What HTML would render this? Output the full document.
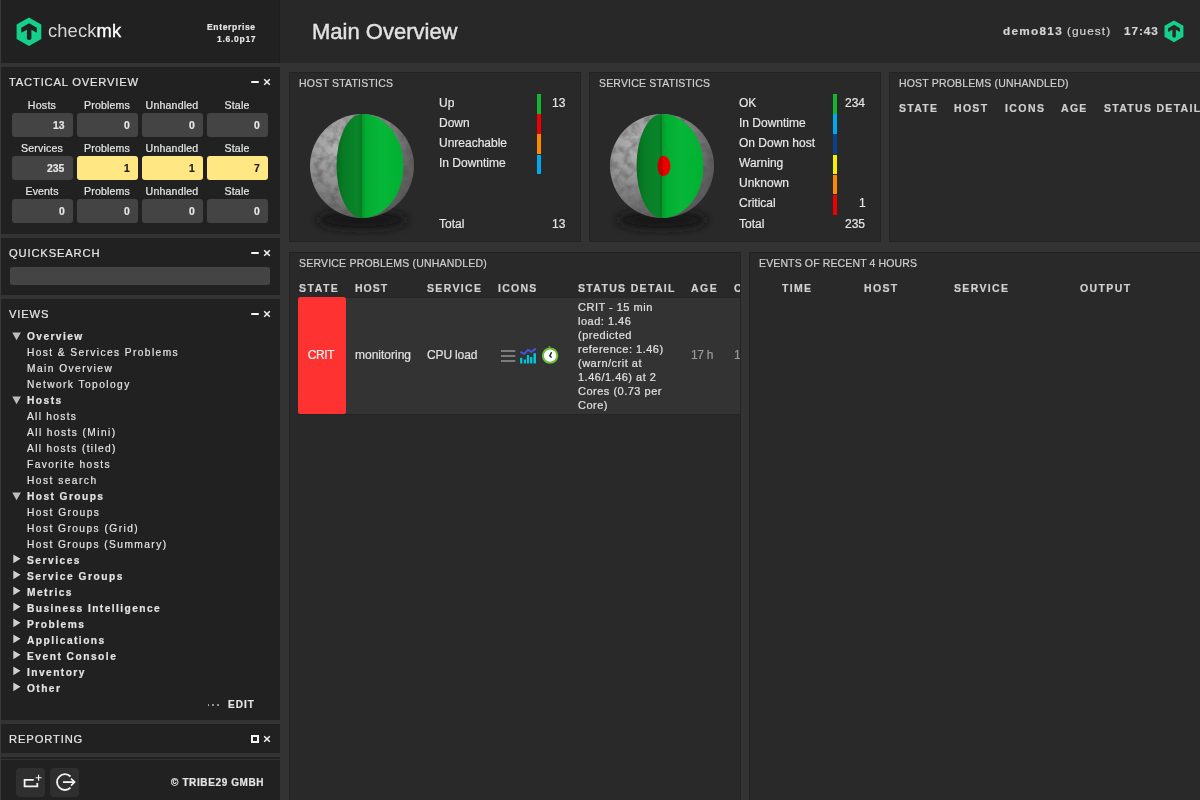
<!DOCTYPE html>
<html><head><meta charset="utf-8">
<style>
html,body{margin:0;padding:0;}
body{width:1200px;height:800px;overflow:hidden;position:relative;background:#333333;font-family:"Liberation Sans", sans-serif;}
.b{position:absolute;}
.t{position:absolute;white-space:nowrap;font-family:"Liberation Sans", sans-serif;will-change:transform;-webkit-text-stroke:0.2px currentColor;}
.sn{position:absolute;left:1px;width:279px;background:#212121;}
.dl{position:absolute;background:#292929;border:1px solid #232323;box-sizing:border-box;}
.box{position:absolute;width:61px;height:24px;background:#444444;border-radius:3px;}
.box.y{background:#ffe783;}
.bar{position:absolute;width:4px;height:19.5px;}
.tri{position:absolute;width:0;height:0;}
</style></head><body>
<!-- sidebar header -->
<div class="b" style="left:0;top:0;width:1px;height:800px;background:#383838"></div>
<div class="b" style="left:1px;top:0;width:278px;height:63px;background:#212121"></div>
<div class="b" style="left:279px;top:0;width:1px;height:63px;background:#1e1e1e"></div>
<!-- main header -->
<div class="b" style="left:280px;top:0;width:920px;height:63px;background:#282828"></div>

<!-- logo -->
<svg class="b" style="left:15px;top:17px" width="28" height="30" viewBox="0 0 28 30">
  <polygon points="14,0.6 26.3,7.6 26.3,21.9 14,28.9 1.6,21.9 1.6,7.6" fill="#15d08a"/>
  <path d="M14.1,6.2 L21.8,10.7 L21.8,15.8 L16.4,12.7 L16.4,21.6 Q16.4,23 14.15,23 Q11.9,23 11.9,21.6 L11.9,12.7 L6.3,15.8 L6.3,10.7 Z" fill="#212121"/>
</svg>
<div class="t" style="left:47.6px;top:18px;font-size:18.4px;line-height:26px;color:#d4d4d4;font-weight:400;letter-spacing:0.1px;-webkit-text-stroke:0px">check<span style="color:#ffffff;-webkit-text-stroke:0.35px #ffffff">mk</span></div>

<!-- header right logo -->
<svg class="b" style="left:1163px;top:20px" width="22" height="23" viewBox="0 0 28 30">
  <polygon points="14,0.6 26.3,7.6 26.3,21.9 14,28.9 1.6,21.9 1.6,7.6" fill="#15d08a"/>
  <path d="M14.1,6.2 L21.8,10.7 L21.8,15.8 L16.4,12.7 L16.4,21.6 Q16.4,23 14.15,23 Q11.9,23 11.9,21.6 L11.9,12.7 L6.3,15.8 L6.3,10.7 Z" fill="#282828"/>
</svg>

<!-- snapins -->
<div class="sn" style="top:67px;height:167px"></div>
<div class="sn" style="top:238px;height:57px"></div>
<div class="sn" style="top:299px;height:421px"></div>
<div class="sn" style="top:724px;height:29px"></div>
<div class="sn" style="top:757px;height:2px"></div>
<div class="sn" style="top:760px;height:40px"></div>

<!-- tactical boxes -->
<div class="box" style="left:12px;top:113px"></div>
<div class="box" style="left:77px;top:113px"></div>
<div class="box" style="left:142px;top:113px"></div>
<div class="box" style="left:207px;top:113px"></div>
<div class="box" style="left:12px;top:156px"></div>
<div class="box y" style="left:77px;top:156px"></div>
<div class="box y" style="left:142px;top:156px"></div>
<div class="box y" style="left:207px;top:156px"></div>
<div class="box" style="left:12px;top:199px"></div>
<div class="box" style="left:77px;top:199px"></div>
<div class="box" style="left:142px;top:199px"></div>
<div class="box" style="left:207px;top:199px"></div>

<!-- snapin controls -->
<div class="b" style="left:251px;top:81px;width:8px;height:2.4px;background:#f4f4f4;border-radius:1px"></div>
<svg class="b" style="left:263px;top:78px" width="8" height="8" viewBox="0 0 8 8"><path d="M1.2,1.2 L6.8,6.8 M6.8,1.2 L1.2,6.8" stroke="#f4f4f4" stroke-width="1.5"/></svg>
<div class="b" style="left:251px;top:252px;width:8px;height:2.4px;background:#f4f4f4;border-radius:1px"></div>
<svg class="b" style="left:263px;top:249px" width="8" height="8" viewBox="0 0 8 8"><path d="M1.2,1.2 L6.8,6.8 M6.8,1.2 L1.2,6.8" stroke="#f4f4f4" stroke-width="1.5"/></svg>
<div class="b" style="left:251px;top:313px;width:8px;height:2.4px;background:#f4f4f4;border-radius:1px"></div>
<svg class="b" style="left:263px;top:310px" width="8" height="8" viewBox="0 0 8 8"><path d="M1.2,1.2 L6.8,6.8 M6.8,1.2 L1.2,6.8" stroke="#f4f4f4" stroke-width="1.5"/></svg>
<div class="b" style="left:251px;top:735px;width:8px;height:8px;border:2px solid #f4f4f4;box-sizing:border-box"></div>
<svg class="b" style="left:263px;top:735px" width="8" height="8" viewBox="0 0 8 8"><path d="M1.2,1.2 L6.8,6.8 M6.8,1.2 L1.2,6.8" stroke="#f4f4f4" stroke-width="1.5"/></svg>

<!-- quicksearch input -->
<div class="b" style="left:10px;top:267px;width:260px;height:18px;background:#444444;border-radius:3px"></div>

<!-- views triangles -->
<svg class="b" style="left:12px;top:332.30px" width="10" height="10" viewBox="0 0 10 10"><path d="M0.2,0.5 H8.9 L4.55,8.3 Z" fill="#bdbdbd"/></svg>
<svg class="b" style="left:12px;top:396.30px" width="10" height="10" viewBox="0 0 10 10"><path d="M0.2,0.5 H8.9 L4.55,8.3 Z" fill="#bdbdbd"/></svg>
<svg class="b" style="left:12px;top:492.30px" width="10" height="10" viewBox="0 0 10 10"><path d="M0.2,0.5 H8.9 L4.55,8.3 Z" fill="#bdbdbd"/></svg>
<svg class="b" style="left:12.5px;top:554.20px" width="10" height="10" viewBox="0 0 10 10"><path d="M0.3,0.5 L7.5,4.85 L0.3,9.2 Z" fill="#d0d0d0"/></svg>
<svg class="b" style="left:12.5px;top:570.20px" width="10" height="10" viewBox="0 0 10 10"><path d="M0.3,0.5 L7.5,4.85 L0.3,9.2 Z" fill="#d0d0d0"/></svg>
<svg class="b" style="left:12.5px;top:586.20px" width="10" height="10" viewBox="0 0 10 10"><path d="M0.3,0.5 L7.5,4.85 L0.3,9.2 Z" fill="#d0d0d0"/></svg>
<svg class="b" style="left:12.5px;top:602.20px" width="10" height="10" viewBox="0 0 10 10"><path d="M0.3,0.5 L7.5,4.85 L0.3,9.2 Z" fill="#d0d0d0"/></svg>
<svg class="b" style="left:12.5px;top:618.20px" width="10" height="10" viewBox="0 0 10 10"><path d="M0.3,0.5 L7.5,4.85 L0.3,9.2 Z" fill="#d0d0d0"/></svg>
<svg class="b" style="left:12.5px;top:634.20px" width="10" height="10" viewBox="0 0 10 10"><path d="M0.3,0.5 L7.5,4.85 L0.3,9.2 Z" fill="#d0d0d0"/></svg>
<svg class="b" style="left:12.5px;top:650.20px" width="10" height="10" viewBox="0 0 10 10"><path d="M0.3,0.5 L7.5,4.85 L0.3,9.2 Z" fill="#d0d0d0"/></svg>
<svg class="b" style="left:12.5px;top:666.20px" width="10" height="10" viewBox="0 0 10 10"><path d="M0.3,0.5 L7.5,4.85 L0.3,9.2 Z" fill="#d0d0d0"/></svg>
<svg class="b" style="left:12.5px;top:682.20px" width="10" height="10" viewBox="0 0 10 10"><path d="M0.3,0.5 L7.5,4.85 L0.3,9.2 Z" fill="#d0d0d0"/></svg>

<!-- edit dots -->
<div class="b" style="left:207.5px;top:704.2px;width:1.6px;height:1.6px;background:#b8b8b8;border-radius:1px"></div>
<div class="b" style="left:212.3px;top:704.2px;width:1.6px;height:1.6px;background:#b8b8b8;border-radius:1px"></div>
<div class="b" style="left:217.1px;top:704.2px;width:1.6px;height:1.6px;background:#b8b8b8;border-radius:1px"></div>

<!-- footer buttons -->
<div class="b" style="left:16px;top:768px;width:29px;height:29px;background:#2f2f2f;border-radius:4px"></div>
<div class="b" style="left:50px;top:768px;width:29px;height:29px;background:#2f2f2f;border-radius:4px"></div>
<svg class="b" style="left:16px;top:768px" width="29" height="29" viewBox="0 0 29 29">
  <path d="M17.8,11.9 H8.6 V18.3 H21.3 V15.1" fill="none" stroke="#f4f4f4" stroke-width="1.8"/>
  <path d="M22.6,6.8 V12.8 M19.6,9.8 H25.6" stroke="#f4f4f4" stroke-width="1.1"/>
</svg>
<svg class="b" style="left:50px;top:768px" width="29" height="29" viewBox="0 0 29 29">
  <path d="M20.5,8.5 A7.9,7.9 0 1 0 20.5,19.7" fill="none" stroke="#f4f4f4" stroke-width="1.8"/>
  <path d="M13,14.1 H24" fill="none" stroke="#f4f4f4" stroke-width="1.8"/>
  <path d="M21,10.6 L24.6,14.1 L21,17.6" fill="none" stroke="#f4f4f4" stroke-width="1.6"/>
</svg>

<!-- dashlets -->
<div class="dl" style="left:289px;top:72px;width:292px;height:170px"></div>
<div class="dl" style="left:589px;top:72px;width:292px;height:170px"></div>
<div class="dl" style="left:889px;top:72px;width:320px;height:170px"></div>
<div class="dl" style="left:289px;top:252px;width:452px;height:560px"></div>
<div class="dl" style="left:749px;top:252px;width:460px;height:560px"></div>

<!-- globes -->
<svg class="b" style="left:302px;top:105.5px" width="120" height="130" viewBox="302 105.5 120 130"><defs>
<radialGradient id="moonh" cx="0.3" cy="0.3" r="0.8">
<stop offset="0" stop-color="#b8b8b8"/><stop offset="0.3" stop-color="#a0a0a0"/><stop offset="0.6" stop-color="#828282"/><stop offset="0.85" stop-color="#626262"/><stop offset="1" stop-color="#585858"/></radialGradient>
<linearGradient id="glh" x1="0" x2="1" y1="0" y2="0"><stop offset="0" stop-color="#066a1e"/><stop offset="0.3" stop-color="#077c25"/><stop offset="0.85" stop-color="#098629"/><stop offset="1" stop-color="#067623"/></linearGradient>
<linearGradient id="grh" x1="0" x2="1" y1="0" y2="0"><stop offset="0" stop-color="#05992c"/><stop offset="0.12" stop-color="#02ae31"/><stop offset="0.45" stop-color="#08b639"/><stop offset="0.75" stop-color="#01b433"/><stop offset="1" stop-color="#02b033"/></linearGradient>
<filter id="blh" x="-50%" y="-100%" width="200%" height="300%"><feGaussianBlur stdDeviation="4.8"/></filter>
<filter id="txh" x="0" y="0" width="100%" height="100%" color-interpolation-filters="sRGB"><feTurbulence type="fractalNoise" baseFrequency="0.13" numOctaves="3" seed="7"/><feColorMatrix type="matrix" values="0 0 0 0 0.3  0 0 0 0 0.3  0 0 0 0 0.3  2.2 0 0 0 -0.85"/></filter>
<clipPath id="cph"><circle cx="362" cy="165.5" r="52"/></clipPath>
</defs><ellipse cx="362" cy="219.5" rx="45" ry="9.5" fill="#121212" filter="url(#blh)"/><circle cx="362" cy="165.5" r="52" fill="url(#moonh)"/><g clip-path="url(#cph)" opacity="0.5"><rect x="310" y="113.5" width="104" height="104" filter="url(#txh)"/></g><path d="M362,113.5 A25.5,52 0 0 0 362,217.5 Z" fill="url(#glh)"/><path d="M362,217.5 A41.5,52 0 0 0 362,113.5 Z" fill="url(#grh)"/></svg><svg class="b" style="left:601.7px;top:105.6px" width="120" height="130" viewBox="601.7 105.6 120 130"><defs>
<radialGradient id="moons" cx="0.3" cy="0.3" r="0.8">
<stop offset="0" stop-color="#b8b8b8"/><stop offset="0.3" stop-color="#a0a0a0"/><stop offset="0.6" stop-color="#828282"/><stop offset="0.85" stop-color="#626262"/><stop offset="1" stop-color="#585858"/></radialGradient>
<linearGradient id="gls" x1="0" x2="1" y1="0" y2="0"><stop offset="0" stop-color="#066a1e"/><stop offset="0.3" stop-color="#077c25"/><stop offset="0.85" stop-color="#098629"/><stop offset="1" stop-color="#067623"/></linearGradient>
<linearGradient id="grs" x1="0" x2="1" y1="0" y2="0"><stop offset="0" stop-color="#05992c"/><stop offset="0.12" stop-color="#02ae31"/><stop offset="0.45" stop-color="#08b639"/><stop offset="0.75" stop-color="#01b433"/><stop offset="1" stop-color="#02b033"/></linearGradient>
<filter id="bls" x="-50%" y="-100%" width="200%" height="300%"><feGaussianBlur stdDeviation="4.8"/></filter>
<filter id="txs" x="0" y="0" width="100%" height="100%" color-interpolation-filters="sRGB"><feTurbulence type="fractalNoise" baseFrequency="0.13" numOctaves="3" seed="7"/><feColorMatrix type="matrix" values="0 0 0 0 0.3  0 0 0 0 0.3  0 0 0 0 0.3  2.2 0 0 0 -0.85"/></filter>
<clipPath id="cps"><circle cx="661.7" cy="165.6" r="52"/></clipPath>
</defs><ellipse cx="661.7" cy="219.6" rx="45" ry="9.5" fill="#121212" filter="url(#bls)"/><circle cx="661.7" cy="165.6" r="52" fill="url(#moons)"/><g clip-path="url(#cps)" opacity="0.5"><rect x="609.7" y="113.6" width="104" height="104" filter="url(#txs)"/></g><path d="M661.7,113.6 A25.5,52 0 0 0 661.7,217.6 Z" fill="url(#gls)"/><path d="M661.7,217.6 A41.5,52 0 0 0 661.7,113.6 Z" fill="url(#grs)"/><path d="M662.7,155.4 A5.5,10.2 0 0 0 662.7,175.79999999999998 Z" fill="#c20000"/><path d="M662.7,175.79999999999998 A7.5,10.2 0 0 0 662.7,155.4 Z" fill="#ec0000"/></svg>

<!-- legend bars host -->
<div class="bar" style="left:537px;top:94px;background:#13b532"></div>
<div class="bar" style="left:537px;top:114.2px;background:#ee0000"></div>
<div class="bar" style="left:537px;top:134.4px;background:#ff8800"></div>
<div class="bar" style="left:537px;top:154.6px;background:#00a8f0"></div>
<!-- legend bars service -->
<div class="bar" style="left:833px;top:94px;background:#13b532"></div>
<div class="bar" style="left:833px;top:114.2px;background:#00a8f0"></div>
<div class="bar" style="left:833px;top:134.4px;background:#0a3f8a"></div>
<div class="bar" style="left:833px;top:154.6px;background:#f5f000"></div>
<div class="bar" style="left:833px;top:174.8px;background:#ff8800"></div>
<div class="bar" style="left:833px;top:195px;background:#ee0000"></div>

<!-- service problem row -->
<div class="b" style="left:298px;top:297px;width:442px;height:118px;background:#333333;border-top:1px solid #262626;border-bottom:1px solid #242424;box-sizing:border-box"></div>
<div class="b" style="left:298px;top:297px;width:48px;height:117px;background:#ff3232;border-radius:2.5px"></div>
<!-- icons -->
<svg class="b" style="left:496px;top:340px" width="70" height="30" viewBox="496 340 70 30">
  <path d="M501,351 H515.3 M501,356 H515.3 M501,360.9 H515.3" stroke="#7c7c7c" stroke-width="2"/>
  <path d="M520.1,357.8 h2.3 v5.7 h-2.3 Z M523.8,359.5 h2.2 v4 h-2.2 Z M526.9,355 h2.2 v8.5 h-2.2 Z M530,357 h2.3 v6.5 h-2.3 Z M533.4,353.3 h2.6 v10.2 h-2.6 Z" fill="#00c4dc"/>
  <path d="M520.9,352.2 L524.3,353.9 L528,349.9 L531.4,351.9 L535.1,349.1" fill="none" stroke="#4256d2" stroke-width="2" stroke-linecap="round" stroke-linejoin="round"/>
  <circle cx="550.1" cy="355.6" r="7.2" fill="#ffffff" stroke="#6cbf38" stroke-width="2"/>
  <path d="M548.3,346.2 L550.3,346.2 L549.3,348.4 Z" fill="#6cbf38"/>
  <path d="M551.6,352.2 L549.8,355.9 L551.6,357.6" fill="none" stroke="#151515" stroke-width="1.4"/>
</svg>
<!-- cut-off column header/data in service problems -->
<div class="b" style="left:740px;top:252px;width:1px;height:548px;background:#232323"></div>

<span class="t" id="t0" style="top:21.55px;font-size:8.5px;line-height:11px;font-weight:700;color:#e6e6e6;letter-spacing:0.664px;right:944.14px;">Enterprise</span>
<span class="t" id="t1" style="top:33.55px;font-size:8.5px;line-height:11px;font-weight:700;color:#e6e6e6;letter-spacing:0.715px;right:944.08px;">1.6.0p17</span>
<span class="t" id="t2" style="top:18.37px;font-size:22px;line-height:28px;font-weight:400;color:#e2e2e2;letter-spacing:0.002px;left:311.80px;-webkit-text-stroke:0.45px currentColor;">Main Overview</span>
<span class="t" id="t3" style="top:23.71px;font-size:11.8px;line-height:15px;font-weight:700;color:#d4d4d4;letter-spacing:1.266px;left:1002.80px;">demo813</span>
<span class="t" id="t4" style="top:23.71px;font-size:11.8px;line-height:15px;font-weight:400;color:#d4d4d4;letter-spacing:1.065px;left:1066.80px;">(guest)</span>
<span class="t" id="t5" style="top:23.71px;font-size:11.8px;line-height:15px;font-weight:700;color:#d4d4d4;letter-spacing:0.900px;left:1123.80px;">17:43</span>
<span class="t" id="t6" style="top:75.12px;font-size:11.2px;line-height:14px;font-weight:400;color:#e6e6e6;letter-spacing:0.815px;left:9.20px;">TACTICAL OVERVIEW</span>
<span class="t" id="t7" style="top:98.57px;font-size:10.6px;line-height:13px;font-weight:400;color:#e6e6e6;letter-spacing:0.252px;left:42.23px;transform:translateX(-50%);">Hosts</span>
<span class="t" id="t8" style="top:118.79px;font-size:10.4px;line-height:13px;font-weight:700;color:#e6e6e6;right:1135.20px;">13</span>
<span class="t" id="t9" style="top:98.57px;font-size:10.6px;line-height:13px;font-weight:400;color:#e6e6e6;letter-spacing:0.143px;left:107.17px;transform:translateX(-50%);">Problems</span>
<span class="t" id="t10" style="top:118.79px;font-size:10.4px;line-height:13px;font-weight:700;color:#e6e6e6;right:1070.20px;">0</span>
<span class="t" id="t11" style="top:98.57px;font-size:10.6px;line-height:13px;font-weight:400;color:#e6e6e6;letter-spacing:0.175px;left:172.19px;transform:translateX(-50%);">Unhandled</span>
<span class="t" id="t12" style="top:118.79px;font-size:10.4px;line-height:13px;font-weight:700;color:#e6e6e6;right:1005.20px;">0</span>
<span class="t" id="t13" style="top:98.57px;font-size:10.6px;line-height:13px;font-weight:400;color:#e6e6e6;letter-spacing:0.150px;left:237.17px;transform:translateX(-50%);">Stale</span>
<span class="t" id="t14" style="top:118.79px;font-size:10.4px;line-height:13px;font-weight:700;color:#e6e6e6;right:940.20px;">0</span>
<span class="t" id="t15" style="top:141.57px;font-size:10.6px;line-height:13px;font-weight:400;color:#e6e6e6;letter-spacing:0.201px;left:42.20px;transform:translateX(-50%);">Services</span>
<span class="t" id="t16" style="top:161.79px;font-size:10.4px;line-height:13px;font-weight:700;color:#e6e6e6;right:1135.20px;">235</span>
<span class="t" id="t17" style="top:141.57px;font-size:10.6px;line-height:13px;font-weight:400;color:#e6e6e6;letter-spacing:0.143px;left:107.17px;transform:translateX(-50%);">Problems</span>
<span class="t" id="t18" style="top:161.79px;font-size:10.4px;line-height:13px;font-weight:700;color:#1a1a1a;right:1070.20px;">1</span>
<span class="t" id="t19" style="top:141.57px;font-size:10.6px;line-height:13px;font-weight:400;color:#e6e6e6;letter-spacing:0.175px;left:172.19px;transform:translateX(-50%);">Unhandled</span>
<span class="t" id="t20" style="top:161.79px;font-size:10.4px;line-height:13px;font-weight:700;color:#1a1a1a;right:1005.20px;">1</span>
<span class="t" id="t21" style="top:141.57px;font-size:10.6px;line-height:13px;font-weight:400;color:#e6e6e6;letter-spacing:0.150px;left:237.17px;transform:translateX(-50%);">Stale</span>
<span class="t" id="t22" style="top:161.79px;font-size:10.4px;line-height:13px;font-weight:700;color:#1a1a1a;right:940.20px;">7</span>
<span class="t" id="t23" style="top:184.57px;font-size:10.6px;line-height:13px;font-weight:400;color:#e6e6e6;letter-spacing:0.120px;left:42.16px;transform:translateX(-50%);">Events</span>
<span class="t" id="t24" style="top:204.79px;font-size:10.4px;line-height:13px;font-weight:700;color:#e6e6e6;right:1135.20px;">0</span>
<span class="t" id="t25" style="top:184.57px;font-size:10.6px;line-height:13px;font-weight:400;color:#e6e6e6;letter-spacing:0.143px;left:107.17px;transform:translateX(-50%);">Problems</span>
<span class="t" id="t26" style="top:204.79px;font-size:10.4px;line-height:13px;font-weight:700;color:#e6e6e6;right:1070.20px;">0</span>
<span class="t" id="t27" style="top:184.57px;font-size:10.6px;line-height:13px;font-weight:400;color:#e6e6e6;letter-spacing:0.175px;left:172.19px;transform:translateX(-50%);">Unhandled</span>
<span class="t" id="t28" style="top:204.79px;font-size:10.4px;line-height:13px;font-weight:700;color:#e6e6e6;right:1005.20px;">0</span>
<span class="t" id="t29" style="top:184.57px;font-size:10.6px;line-height:13px;font-weight:400;color:#e6e6e6;letter-spacing:0.150px;left:237.17px;transform:translateX(-50%);">Stale</span>
<span class="t" id="t30" style="top:204.79px;font-size:10.4px;line-height:13px;font-weight:700;color:#e6e6e6;right:940.20px;">0</span>
<span class="t" id="t31" style="top:246.12px;font-size:11.2px;line-height:14px;font-weight:400;color:#e6e6e6;letter-spacing:0.840px;left:9.20px;">QUICKSEARCH</span>
<span class="t" id="t32" style="top:306.92px;font-size:11.2px;line-height:14px;font-weight:400;color:#e6e6e6;letter-spacing:0.840px;left:9.20px;">VIEWS</span>
<span class="t" id="t33" style="top:329.86px;font-size:10.2px;line-height:13px;font-weight:700;color:#e3e3e3;letter-spacing:1.407px;left:27.20px;">Overview</span>
<span class="t" id="t34" style="top:345.86px;font-size:10.2px;line-height:13px;font-weight:400;color:#e3e3e3;letter-spacing:1.406px;left:27.20px;">Host &amp; Services Problems</span>
<span class="t" id="t35" style="top:361.86px;font-size:10.2px;line-height:13px;font-weight:400;color:#e3e3e3;letter-spacing:1.450px;left:27.20px;">Main Overview</span>
<span class="t" id="t36" style="top:377.86px;font-size:10.2px;line-height:13px;font-weight:400;color:#e3e3e3;letter-spacing:1.434px;left:27.20px;">Network Topology</span>
<span class="t" id="t37" style="top:393.86px;font-size:10.2px;line-height:13px;font-weight:700;color:#e3e3e3;letter-spacing:1.486px;left:27.20px;">Hosts</span>
<span class="t" id="t38" style="top:409.86px;font-size:10.2px;line-height:13px;font-weight:400;color:#e3e3e3;letter-spacing:1.293px;left:27.20px;">All hosts</span>
<span class="t" id="t39" style="top:425.86px;font-size:10.2px;line-height:13px;font-weight:400;color:#e3e3e3;letter-spacing:1.417px;left:27.20px;">All hosts (Mini)</span>
<span class="t" id="t40" style="top:441.86px;font-size:10.2px;line-height:13px;font-weight:400;color:#e3e3e3;letter-spacing:1.356px;left:27.20px;">All hosts (tiled)</span>
<span class="t" id="t41" style="top:457.86px;font-size:10.2px;line-height:13px;font-weight:400;color:#e3e3e3;letter-spacing:1.430px;left:27.20px;">Favorite hosts</span>
<span class="t" id="t42" style="top:473.86px;font-size:10.2px;line-height:13px;font-weight:400;color:#e3e3e3;letter-spacing:1.475px;left:27.20px;">Host search</span>
<span class="t" id="t43" style="top:489.86px;font-size:10.2px;line-height:13px;font-weight:700;color:#e3e3e3;letter-spacing:1.425px;left:27.20px;">Host Groups</span>
<span class="t" id="t44" style="top:505.86px;font-size:10.2px;line-height:13px;font-weight:400;color:#e3e3e3;letter-spacing:1.475px;left:27.20px;">Host Groups</span>
<span class="t" id="t45" style="top:521.86px;font-size:10.2px;line-height:13px;font-weight:400;color:#e3e3e3;letter-spacing:1.450px;left:27.20px;">Host Groups (Grid)</span>
<span class="t" id="t46" style="top:537.86px;font-size:10.2px;line-height:13px;font-weight:400;color:#e3e3e3;letter-spacing:1.436px;left:27.20px;">Host Groups (Summary)</span>
<span class="t" id="t47" style="top:553.86px;font-size:10.2px;line-height:13px;font-weight:700;color:#e3e3e3;letter-spacing:1.515px;left:27.20px;">Services</span>
<span class="t" id="t48" style="top:569.86px;font-size:10.2px;line-height:13px;font-weight:700;color:#e3e3e3;letter-spacing:1.550px;left:27.20px;">Service Groups</span>
<span class="t" id="t49" style="top:585.86px;font-size:10.2px;line-height:13px;font-weight:700;color:#e3e3e3;letter-spacing:1.467px;left:27.20px;">Metrics</span>
<span class="t" id="t50" style="top:601.86px;font-size:10.2px;line-height:13px;font-weight:700;color:#e3e3e3;letter-spacing:1.425px;left:27.20px;">Business Intelligence</span>
<span class="t" id="t51" style="top:617.86px;font-size:10.2px;line-height:13px;font-weight:700;color:#e3e3e3;letter-spacing:1.494px;left:27.20px;">Problems</span>
<span class="t" id="t52" style="top:633.86px;font-size:10.2px;line-height:13px;font-weight:700;color:#e3e3e3;letter-spacing:1.459px;left:27.20px;">Applications</span>
<span class="t" id="t53" style="top:649.86px;font-size:10.2px;line-height:13px;font-weight:700;color:#e3e3e3;letter-spacing:1.508px;left:27.20px;">Event Console</span>
<span class="t" id="t54" style="top:665.86px;font-size:10.2px;line-height:13px;font-weight:700;color:#e3e3e3;letter-spacing:1.450px;left:27.20px;">Inventory</span>
<span class="t" id="t55" style="top:681.86px;font-size:10.2px;line-height:13px;font-weight:700;color:#e3e3e3;letter-spacing:1.425px;left:27.20px;">Other</span>
<span class="t" id="t56" style="top:698.73px;font-size:10px;line-height:12px;font-weight:700;color:#e3e3e3;letter-spacing:1.000px;right:944.80px;">EDIT</span>
<span class="t" id="t57" style="top:732.32px;font-size:11.2px;line-height:14px;font-weight:400;color:#e6e6e6;letter-spacing:0.875px;left:9.00px;">REPORTING</span>
<span class="t" id="t58" style="top:776.53px;font-size:10px;line-height:12px;font-weight:700;color:#e3e3e3;letter-spacing:0.615px;right:935.68px;">© TRIBE29 GMBH</span>
<span class="t" id="t59" style="top:77.36px;font-size:10.5px;line-height:13px;font-weight:400;color:#cfcfcf;letter-spacing:0.214px;left:298.80px;">HOST STATISTICS</span>
<span class="t" id="t60" style="top:77.36px;font-size:10.5px;line-height:13px;font-weight:400;color:#cfcfcf;letter-spacing:0.176px;left:598.80px;">SERVICE STATISTICS</span>
<span class="t" id="t61" style="top:77.36px;font-size:10.5px;line-height:13px;font-weight:400;color:#cfcfcf;letter-spacing:0.166px;left:898.80px;">HOST PROBLEMS (UNHANDLED)</span>
<span class="t" id="t62" style="top:256.66px;font-size:10.5px;line-height:13px;font-weight:400;color:#cfcfcf;letter-spacing:0.200px;left:298.80px;">SERVICE PROBLEMS (UNHANDLED)</span>
<span class="t" id="t63" style="top:257.46px;font-size:10.5px;line-height:13px;font-weight:400;color:#cfcfcf;letter-spacing:0.131px;left:759.00px;">EVENTS OF RECENT 4 HOURS</span>
<span class="t" id="t64" style="top:95.84px;font-size:12px;line-height:15px;font-weight:400;color:#e6e6e6;left:439.20px;">Up</span>
<span class="t" id="t65" style="top:115.99px;font-size:12px;line-height:15px;font-weight:400;color:#e6e6e6;left:439.20px;">Down</span>
<span class="t" id="t66" style="top:136.14px;font-size:12px;line-height:15px;font-weight:400;color:#e6e6e6;left:439.20px;">Unreachable</span>
<span class="t" id="t67" style="top:156.29px;font-size:12px;line-height:15px;font-weight:400;color:#e6e6e6;left:439.20px;">In Downtime</span>
<span class="t" id="t68" style="top:217.04px;font-size:12px;line-height:15px;font-weight:400;color:#e6e6e6;left:439.20px;">Total</span>
<span class="t" id="t69" style="top:95.84px;font-size:12px;line-height:15px;font-weight:400;color:#e6e6e6;right:634.80px;">13</span>
<span class="t" id="t70" style="top:217.04px;font-size:12px;line-height:15px;font-weight:400;color:#e6e6e6;right:634.80px;">13</span>
<span class="t" id="t71" style="top:95.74px;font-size:12px;line-height:15px;font-weight:400;color:#e6e6e6;left:738.80px;">OK</span>
<span class="t" id="t72" style="top:115.84px;font-size:12px;line-height:15px;font-weight:400;color:#e6e6e6;left:738.80px;">In Downtime</span>
<span class="t" id="t73" style="top:135.94px;font-size:12px;line-height:15px;font-weight:400;color:#e6e6e6;left:738.80px;">On Down host</span>
<span class="t" id="t74" style="top:156.04px;font-size:12px;line-height:15px;font-weight:400;color:#e6e6e6;left:738.80px;">Warning</span>
<span class="t" id="t75" style="top:176.14px;font-size:12px;line-height:15px;font-weight:400;color:#e6e6e6;left:738.80px;">Unknown</span>
<span class="t" id="t76" style="top:196.24px;font-size:12px;line-height:15px;font-weight:400;color:#e6e6e6;left:738.80px;">Critical</span>
<span class="t" id="t77" style="top:217.04px;font-size:12px;line-height:15px;font-weight:400;color:#e6e6e6;left:738.80px;">Total</span>
<span class="t" id="t78" style="top:95.74px;font-size:12px;line-height:15px;font-weight:400;color:#e6e6e6;right:334.80px;">234</span>
<span class="t" id="t79" style="top:196.24px;font-size:12px;line-height:15px;font-weight:400;color:#e6e6e6;right:334.80px;">1</span>
<span class="t" id="t80" style="top:217.04px;font-size:12px;line-height:15px;font-weight:400;color:#e6e6e6;right:334.80px;">235</span>
<span class="t" id="t81" style="top:101.76px;font-size:10.5px;line-height:13px;font-weight:700;color:#d0d0d0;letter-spacing:1.300px;left:898.80px;">STATE</span>
<span class="t" id="t82" style="top:101.76px;font-size:10.5px;line-height:13px;font-weight:700;color:#d0d0d0;letter-spacing:1.299px;left:954.20px;">HOST</span>
<span class="t" id="t83" style="top:101.76px;font-size:10.5px;line-height:13px;font-weight:700;color:#d0d0d0;letter-spacing:1.430px;left:1004.80px;">ICONS</span>
<span class="t" id="t84" style="top:101.76px;font-size:10.5px;line-height:13px;font-weight:700;color:#d0d0d0;letter-spacing:1.300px;left:1060.70px;">AGE</span>
<span class="t" id="t85" style="top:101.76px;font-size:10.5px;line-height:13px;font-weight:700;color:#d0d0d0;letter-spacing:1.300px;left:1103.55px;">STATUS DETAIL</span>
<span class="t" id="t86" style="top:282.06px;font-size:10.5px;line-height:13px;font-weight:700;color:#d0d0d0;letter-spacing:1.500px;left:298.80px;">STATE</span>
<span class="t" id="t87" style="top:282.06px;font-size:10.5px;line-height:13px;font-weight:700;color:#d0d0d0;letter-spacing:0.997px;left:354.50px;">HOST</span>
<span class="t" id="t88" style="top:282.06px;font-size:10.5px;line-height:13px;font-weight:700;color:#d0d0d0;letter-spacing:1.333px;left:426.60px;">SERVICE</span>
<span class="t" id="t89" style="top:282.06px;font-size:10.5px;line-height:13px;font-weight:700;color:#d0d0d0;letter-spacing:1.250px;left:497.80px;">ICONS</span>
<span class="t" id="t90" style="top:282.06px;font-size:10.5px;line-height:13px;font-weight:700;color:#d0d0d0;letter-spacing:1.331px;left:577.60px;">STATUS DETAIL</span>
<span class="t" id="t91" style="top:282.06px;font-size:10.5px;line-height:13px;font-weight:700;color:#d0d0d0;letter-spacing:1.500px;left:691.30px;">AGE</span>
<span class="t" id="t92" style="top:282.36px;font-size:10.5px;line-height:13px;font-weight:700;color:#d0d0d0;letter-spacing:1.330px;left:782.00px;">TIME</span>
<span class="t" id="t93" style="top:282.36px;font-size:10.5px;line-height:13px;font-weight:700;color:#d0d0d0;letter-spacing:1.331px;left:864.40px;">HOST</span>
<span class="t" id="t94" style="top:282.36px;font-size:10.5px;line-height:13px;font-weight:700;color:#d0d0d0;letter-spacing:1.335px;left:953.70px;">SERVICE</span>
<span class="t" id="t95" style="top:282.36px;font-size:10.5px;line-height:13px;font-weight:700;color:#d0d0d0;letter-spacing:1.400px;left:1080.20px;">OUTPUT</span>
<span class="t" id="t96" style="top:282.06px;font-size:10.5px;line-height:13px;font-weight:700;color:#d0d0d0;letter-spacing:1.300px;left:733.60px;width:6.2px;overflow:hidden;">COMMENTS</span>
<span class="t" id="t97" style="top:347.64px;font-size:12px;line-height:15px;font-weight:400;color:#9a9a9a;left:733.80px;width:6px;overflow:hidden;">1 m</span>
<span class="t" id="t98" style="top:347.64px;font-size:12px;line-height:15px;font-weight:400;color:#f0f0f0;letter-spacing:-0.332px;left:321.43px;transform:translateX(-50%);">CRIT</span>
<span class="t" id="t99" style="top:347.64px;font-size:12px;line-height:15px;font-weight:400;color:#e0e0e0;letter-spacing:-0.003px;left:354.50px;">monitoring</span>
<span class="t" id="t100" style="top:347.64px;font-size:12px;line-height:15px;font-weight:400;color:#e0e0e0;letter-spacing:-0.145px;left:426.60px;">CPU load</span>
<span class="t" id="t101" style="top:347.64px;font-size:12px;line-height:15px;font-weight:400;color:#9a9a9a;letter-spacing:-0.333px;left:691.30px;">17 h</span>
<span class="t" id="t102" style="top:300.19px;font-size:11px;line-height:14px;font-weight:400;color:#e0e0e0;letter-spacing:0.501px;left:577.60px;">CRIT - 15 min</span>
<span class="t" id="t103" style="top:314.19px;font-size:11px;line-height:14px;font-weight:400;color:#e0e0e0;letter-spacing:0.500px;left:577.60px;">load: 1.46</span>
<span class="t" id="t104" style="top:328.19px;font-size:11px;line-height:14px;font-weight:400;color:#e0e0e0;letter-spacing:0.500px;left:577.60px;">(predicted</span>
<span class="t" id="t105" style="top:342.19px;font-size:11px;line-height:14px;font-weight:400;color:#e0e0e0;letter-spacing:0.500px;left:577.60px;">reference: 1.46)</span>
<span class="t" id="t106" style="top:356.19px;font-size:11px;line-height:14px;font-weight:400;color:#e0e0e0;letter-spacing:0.500px;left:577.60px;">(warn/crit at</span>
<span class="t" id="t107" style="top:370.19px;font-size:11px;line-height:14px;font-weight:400;color:#e0e0e0;letter-spacing:0.500px;left:577.60px;">1.46/1.46) at 2</span>
<span class="t" id="t108" style="top:384.19px;font-size:11px;line-height:14px;font-weight:400;color:#e0e0e0;letter-spacing:0.500px;left:577.60px;">Cores (0.73 per</span>
<span class="t" id="t109" style="top:398.19px;font-size:11px;line-height:14px;font-weight:400;color:#e0e0e0;letter-spacing:0.500px;left:577.60px;">Core)</span>
</body></html>
